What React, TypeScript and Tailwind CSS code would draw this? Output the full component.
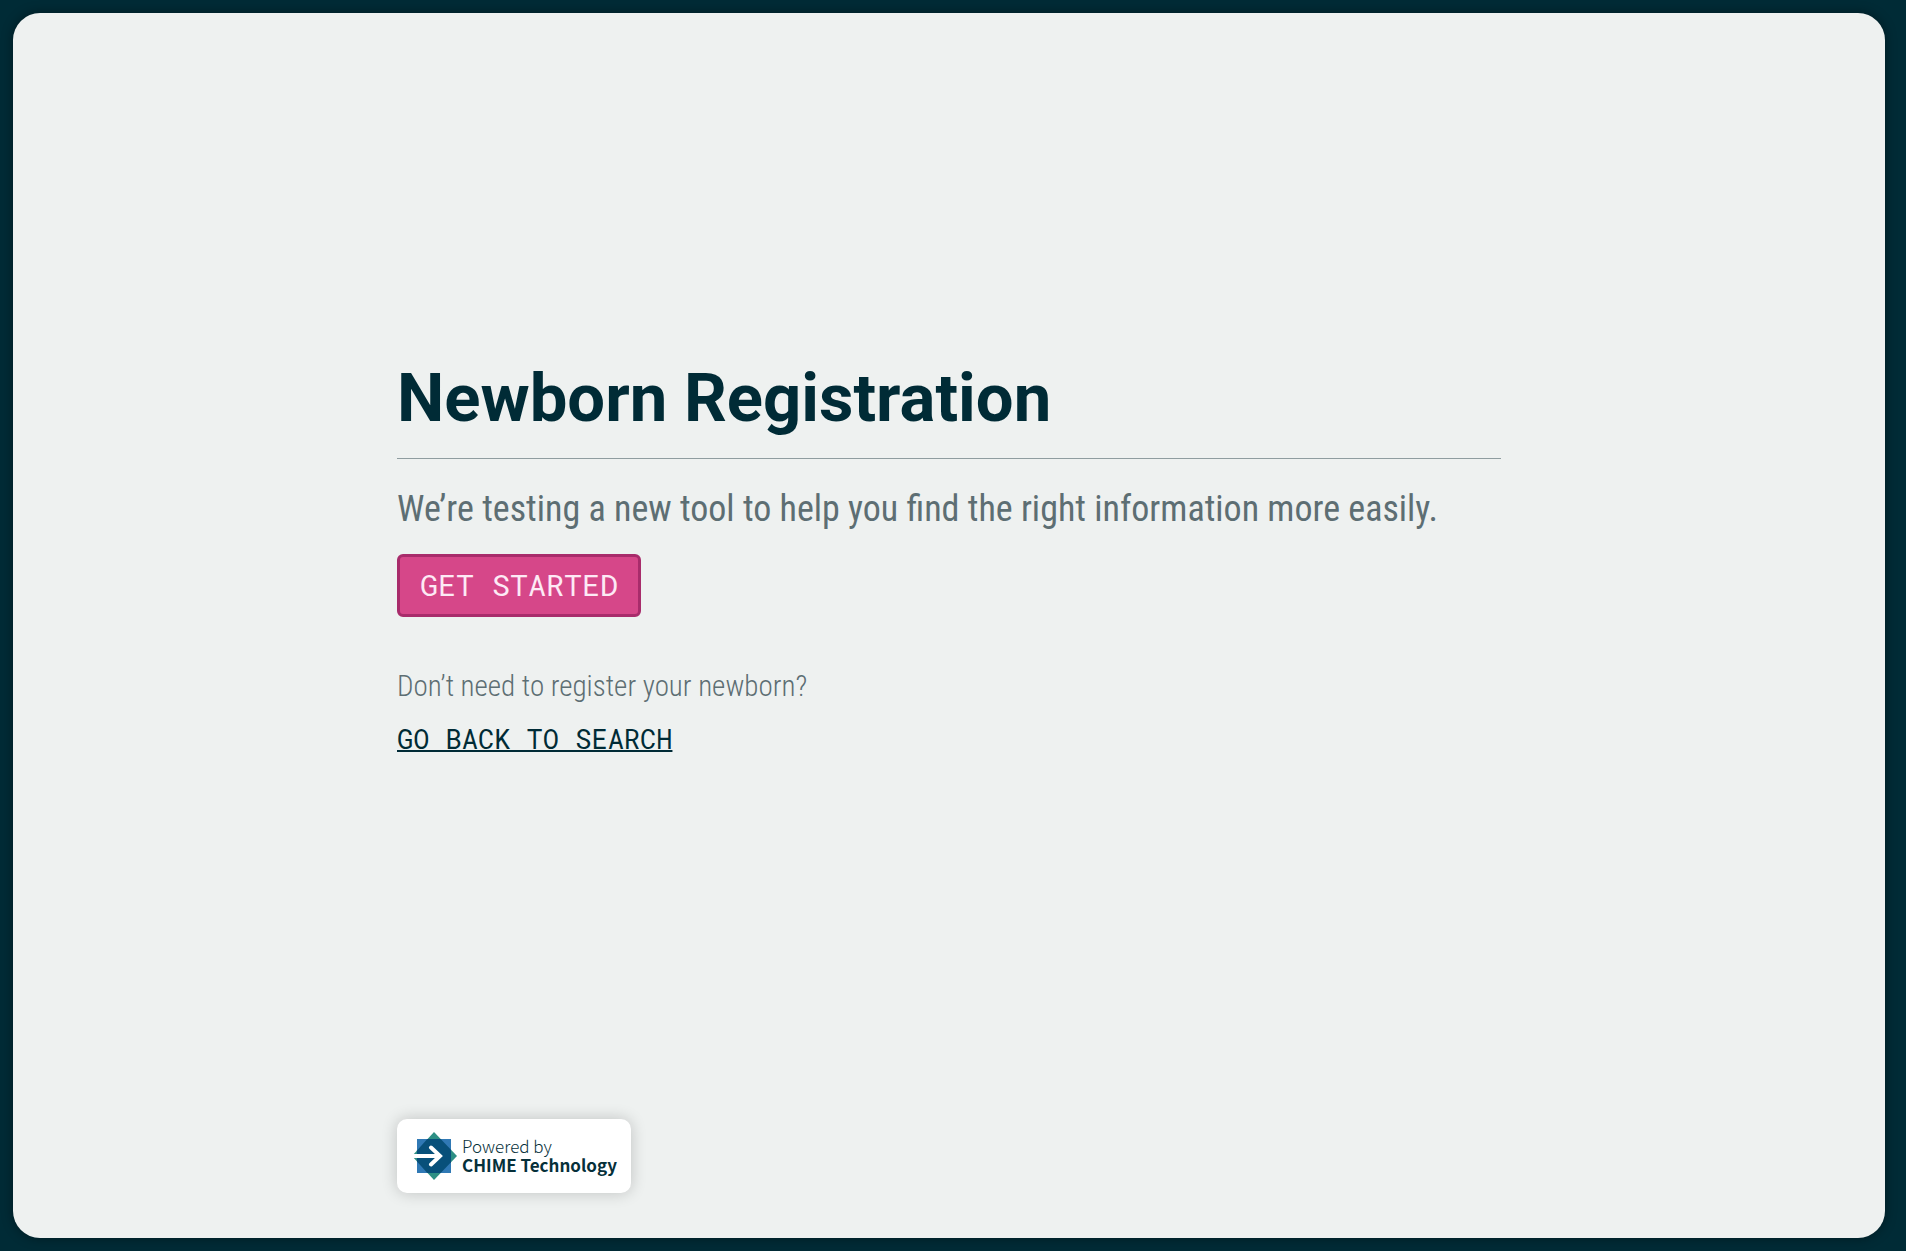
import React from 'react';

function ChimeMark() {
  return (
    <svg viewBox="0 0 46 48" className="h-12 w-[46px] shrink-0" aria-hidden="true">
      <path d="M22 0 45 24 22 48 0 24Z" fill="#2d8f84" />
      <path d="M5 7h34v34H5Z" fill="#3079b5" />
      <path d="M15.300 7h13.400L39 17.700v12.600L28.700 41H15.300L5 29.500v-11Z" fill="#08507a" />
      <path d="M1 24h27M19 15.500l9 8.500-9 8.500" fill="none" stroke="#fff" strokeWidth="4" strokeLinecap="round" />
    </svg>
  );
}

function PoweredBy() {
  return (
    <a
      href="#chime"
      className="flex h-[74px] w-[234px] items-center gap-1 rounded-[10px] bg-white pl-[15px] text-[#06303a] shadow-[0_0_16px_rgba(0,0,0,0.2)]"
    >
      <ChimeMark />
      <span className="flex flex-col pb-0.5 font-['Noto_Sans_CJK_SC',sans-serif] text-[17px] leading-[19px] whitespace-nowrap">
        <span className="font-light">Powered by</span>
        <span className="font-bold">CHIME Technology</span>
      </span>
    </a>
  );
}

export default function App() {
  return (
    <div className="flex min-h-screen bg-[#002b36] py-[13px] pr-[21px] pl-[13px] font-['Roboto_Condensed',Roboto,sans-serif]">
      <main className="flex grow flex-col items-center rounded-[27px] bg-[#eef1f0] px-6 shadow-[0_0_12px_rgba(0,0,0,0.4)]">
        <div className="flex w-full max-w-[1104px] grow flex-col items-start pb-[45px]">
          <section className="flex w-full grow flex-col items-start justify-center pb-4">
            <h1 className="w-full border-b border-[#8f9da0] pb-5 font-[Roboto,sans-serif] text-[67px] leading-[80px] font-bold text-[#002b36]">
              Newborn Registration
            </h1>
            <p className="mt-7 text-[36px] leading-[44px] text-[#5d6e73]">
              We’re testing a new tool to help you find the right information more easily.
            </p>
            <button
              type="button"
              className="mt-[23px] h-[63px] rounded-md border-[3px] border-[#a82c6b] bg-[#d64789] px-5 font-['Roboto_Mono','Liberation_Mono',monospace] text-[30px] leading-[52px] text-[#fdeaf5]"
            >
              GET STARTED
            </button>
            <p className="mt-12 text-[29px] leading-[42px] font-light text-[#5d6e73]">
              Don’t need to register your newborn?
            </p>
            <a
              href="#search"
              className="mt-3 font-['Roboto_Mono','Liberation_Mono',monospace] text-[27px] leading-[40px] text-[#002b36] underline decoration-2"
            >
              GO BACK TO SEARCH
            </a>
          </section>
          <PoweredBy />
        </div>
      </main>
    </div>
  );
}
